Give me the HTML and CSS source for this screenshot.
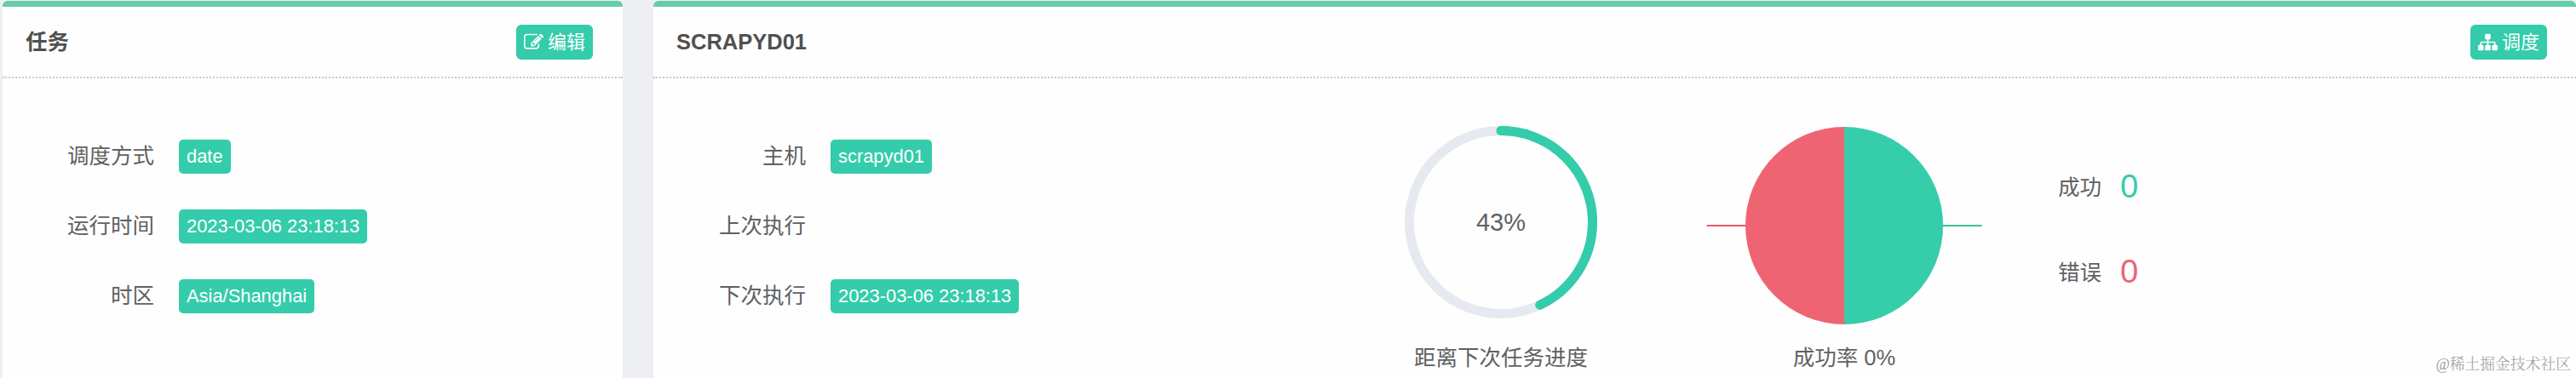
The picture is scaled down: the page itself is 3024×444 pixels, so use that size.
FILE: index.html
```html
<!DOCTYPE html>
<html lang="zh-CN">
<head>
<meta charset="utf-8">
<title>任务</title>
<link rel="stylesheet" href="styles.css">
</head>
<body>
<main class="board">
  <section class="card card-task">
    <header class="card-head">
      <h2 class="card-title">任务</h2>
      <button class="btn">
        <svg class="btn-icon" viewBox="0 0 1792 1792"><path fill="currentColor" d="M888 1184l116-116-152-152-116 116v56h96v96h56zm440-720q-16-16-33 1l-350 350q-17 17-1 33t33-1l350-350q17-17 1-33zm80 594v190q0 119-84.500 203.500t-203.500 84.500h-832q-119 0-203.500-84.500t-84.500-203.500v-832q0-119 84.500-203.500t203.500-84.500h832q63 0 117 25 15 7 18 23 3 17-9 29l-49 49q-14 14-32 8-23-6-45-6h-832q-66 0-113 47t-47 113v832q0 66 47 113t113 47h832q66 0 113-47t47-113v-126q0-13 9-22l64-64q15-15 35-7t20 29zm-96-738l288 288-672 672h-288v-288zm444 132l-92 92-288-288 92-92q28-28 68-28t68 28l152 152q28 28 28 68t-28 68z"/></svg>
        <span>编辑</span>
      </button>
    </header>
    <dl class="fields fields-task">
      <dt>调度方式</dt><dd><span class="tag">date</span></dd>
      <dt>运行时间</dt><dd><span class="tag">2023-03-06 23:18:13</span></dd>
      <dt>时区</dt><dd><span class="tag">Asia/Shanghai</span></dd>
    </dl>
  </section>

  <section class="card card-host">
    <header class="card-head">
      <h2 class="card-title">SCRAPYD01</h2>
      <button class="btn">
        <svg class="btn-icon" viewBox="0 0 1792 1792"><path fill="currentColor" d="M1792 1248v320q0 40-28 68t-68 28h-320q-40 0-68-28t-28-68v-320q0-40 28-68t68-28h96v-192h-512v192h96q40 0 68 28t28 68v320q0 40-28 68t-68 28h-320q-40 0-68-28t-28-68v-320q0-40 28-68t68-28h96v-192h-512v192h96q40 0 68 28t28 68v320q0 40-28 68t-68 28h-320q-40 0-68-28t-28-68v-320q0-40 28-68t68-28h96v-192q0-52 38-90t90-38h512v-192h-96q-40 0-68-28t-28-68v-320q0-40 28-68t68-28h320q40 0 68 28t28 68v320q0 40-28 68t-68 28h-96v192h512q52 0 90 38t38 90v192h96q40 0 68 28t28 68z"/></svg>
        <span>调度</span>
      </button>
    </header>
    <div class="host-body">
      <dl class="fields fields-host">
        <dt>主机</dt><dd><span class="tag">scrapyd01</span></dd>
        <dt>上次执行</dt><dd></dd>
        <dt>下次执行</dt><dd><span class="tag">2023-03-06 23:18:13</span></dd>
      </dl>
      <figure class="chart chart-progress">
        <div class="ring">
          <svg class="ring-svg" viewBox="0 0 226 226">
            <circle class="ring-track" cx="113" cy="113" r="107.500"/>
            <circle class="ring-value" cx="113" cy="113" r="107.500" pathLength="100" transform="rotate(-90 113 113)"/>
          </svg>
          <span class="ring-text">43%</span>
        </div>
        <figcaption>距离下次任务进度</figcaption>
      </figure>
      <figure class="chart chart-rate">
        <svg class="pie" viewBox="0 0 324 232">
          <path class="bad-line" d="M0.500 116H46"/>
          <path class="good-line" d="M278 116H323.500"/>
          <path class="bad-slice" d="M162 0A116 116 0 0 0 162 232Z"/>
          <path class="good-slice" d="M162 0A116 116 0 0 1 162 232Z"/>
          <path class="pie-seam" d="M162 0V232"/>
        </svg>
        <figcaption>成功率 0%</figcaption>
      </figure>
      <div class="counts">
        <div class="count"><span>成功</span><b class="num good">0</b></div>
        <div class="count"><span>错误</span><b class="num bad">0</b></div>
      </div>
    </div>
    <p class="credit">@稀土掘金技术社区</p>
  </section>
</main>
</body>
</html>
```
FILE: styles.css
```css
* { box-sizing: border-box; }

body {
  margin: 0;
  height: 444px;
  overflow: hidden;
  background: #eeeff3;
  color: #5f6163;
  font-family: "Liberation Sans", "Noto Sans CJK SC", sans-serif;
  font-size: 25.5px;
}

h2, dl, dd, figure, p { margin: 0; }

.board {
  display: flex;
  gap: 36px;
  height: 444px;
  padding: 1px 0 0 3px;
}

.card {
  position: relative;
  height: 450px;
  background: #fefefe;
  border-top: 7px solid #66cda5;
  border-radius: 6px 6px 0 0;
}
.card-task { width: 728px; }
.card-host { flex: 1; }

.card-head {
  display: flex;
  align-items: center;
  justify-content: space-between;
  height: 84px;
  padding: 0 34px 0 27px;
  border-bottom: 2px dotted #c9c9c9;
}
.card-task .card-head { padding-right: 35px; }
.card-title {
  margin-top: -1px;
  font-size: 25.5px;
  font-weight: 700;
  line-height: 36px;
  color: #505050;
}

.btn {
  display: flex;
  align-items: center;
  gap: 5px;
  width: 90px;
  height: 41px;
  margin-top: 1px;
  padding: 0 0 0 9px;
  border: 0;
  border-radius: 6px;
  background: #34ccaa;
  color: #fff;
  font: 22px/41px "Liberation Sans", "Noto Sans CJK SC", sans-serif;
}
.btn span { white-space: nowrap; }
.btn-icon { flex: none; width: 23px; height: 23px; }

.fields {
  display: grid;
  grid-auto-rows: 82px;
  column-gap: 29px;
  align-items: center;
  padding-top: 51px;
  line-height: 40px;
}
.fields-task { grid-template-columns: 178px 1fr; }
.fields-host { grid-template-columns: 179px 1fr; width: 845px; }
.fields dt { padding-bottom: 3px; text-align: right; }
.fields dd { display: flex; }

.tag {
  padding: 0 9px;
  height: 40px;
  border-radius: 5px;
  background: #34ccaa;
  color: #fff;
  font-size: 21.900px;
  line-height: 39px;
}

.host-body { display: flex; }

.chart { display: flex; flex-direction: column; align-items: center; }
.chart figcaption { line-height: 36px; white-space: nowrap; }

.chart-progress { width: 300px; padding-top: 56px; }
.ring { display: grid; place-items: center; margin-bottom: 28px; }
.ring-svg, .ring-text { grid-area: 1 / 1; }
.ring-svg { display: block; width: 226px; height: 226px; }
.ring-svg circle { fill: none; stroke-width: 11; }
.ring-track { stroke: #e6e9f0; }
.ring-value { stroke: #34ccaa; stroke-linecap: round; stroke-dasharray: 43 100; }
.ring-text { font-size: 29px; line-height: 36px; }

.chart-rate { width: 324px; margin-left: 91px; padding-top: 57px; }
.pie { display: block; width: 324px; height: 232px; margin-bottom: 21px; }
.bad-line { stroke: #e05b6b; stroke-width: 2; }
.good-line { stroke: #3bbd9d; stroke-width: 2; }
.bad-slice { fill: #ef6473; }
.good-slice { fill: #36cdab; }
.pie-seam { stroke: #9a9c92; stroke-width: 1; }

.counts { padding: 102px 0 0 89px; }
.count {
  display: flex;
  align-items: center;
  gap: 22px;
  height: 50px;
  margin-bottom: 50px;
}
.count span { padding-bottom: 4px; }
.num { font-size: 38px; font-weight: 400; line-height: 50px; }
.good { color: #34ccaa; }
.bad { color: #ec6474; }

.credit {
  position: absolute;
  right: 6px;
  bottom: 11px;
  font-family: "Liberation Serif", "Noto Serif CJK SC", "Noto Sans CJK SC", serif;
  font-size: 17.800px;
  font-weight: 300;
  line-height: 24px;
  color: #999;
}
```
